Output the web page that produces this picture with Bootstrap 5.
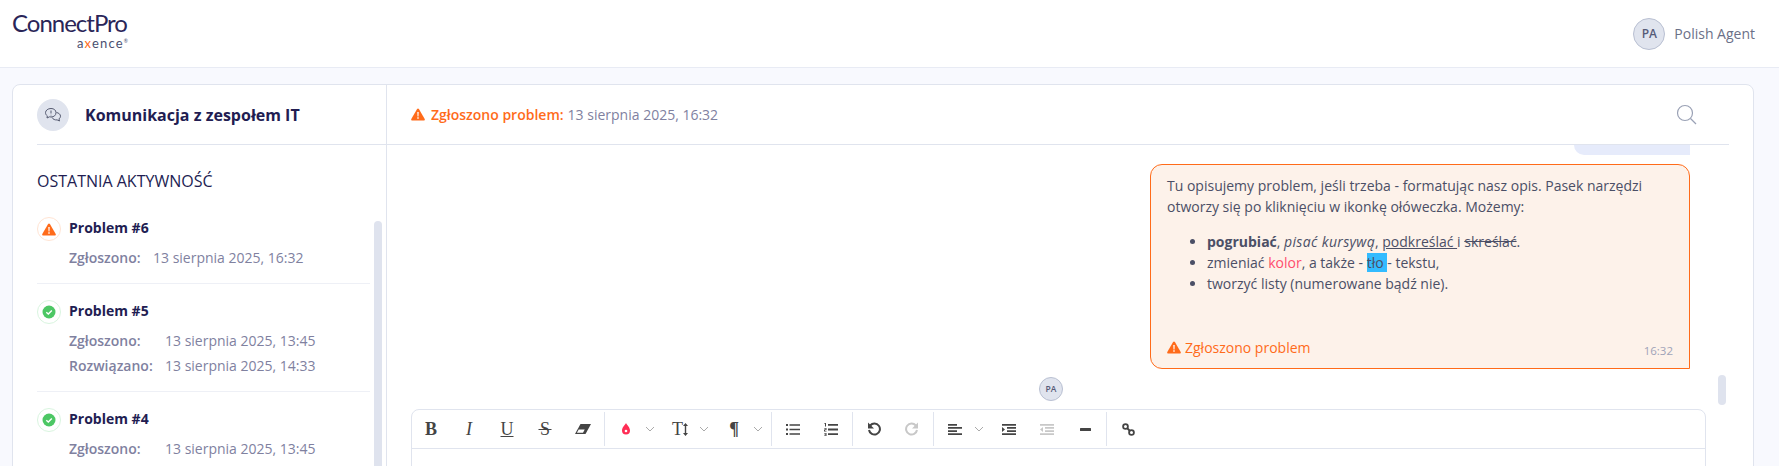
<!doctype html>
<html lang="pl"><head><meta charset="utf-8"><title>ConnectPro</title>
<link href="https://cdn.jsdelivr.net/npm/bootstrap@5.3.0/dist/css/bootstrap.min.css" rel="stylesheet">
<style>
html,body{height:466px;overflow:hidden}
body{font-family:"Open Sans","Noto Sans",sans-serif;background:#f8f9fe;color:#4b4f66;font-size:14px}
.topbar{height:68px;background:#fff;border-bottom:1px solid #e8ebf4;padding:0 24px 0 12px}
.logo-box{width:116px;margin-top:-7px;line-height:1}
.logo-main{font-family:"Lato",sans-serif;font-weight:400;font-size:24px;color:#2a2558;letter-spacing:-1px;display:block;line-height:24px;white-space:nowrap}
.logo-sub{font-family:"Lato",sans-serif;font-size:13px;color:#4a4f70;display:block;text-align:right;line-height:11px;margin-top:3px;letter-spacing:1.2px}
.logo-sub b{color:#ff6b1a;font-weight:400}
.logo-sub sup{font-size:5px;top:-1em;letter-spacing:0}
.ava{width:32px;height:32px;border-radius:50%;background:#e0e4ee;border:1px solid #b9c0d2;color:#565b78;font-weight:600;font-size:12px}
.ava-sm{width:24px;height:24px;font-size:8.5px}
.agent-name{color:#6b7088;font-size:14px;margin-left:9px}
.panel{margin:16px 25px 0 12px;background:#fff;border:1px solid #e0e4ee;border-radius:8px 8px 0 0;height:400px;overflow:hidden}
.side{width:374px;border-right:1px solid #e0e4ee;flex:none}
.side-head{height:60px;margin-left:24px;border-bottom:1px solid #e0e4ee}
.head-ico{width:32px;height:32px;border-radius:50%;background:#e0e4ee;margin-right:16px}
.side-title{font-size:16px;font-weight:700;color:#221d52}
.recent{font-size:16px;font-weight:500;color:#221d52;margin:26px 0 0 24px;line-height:20px}
.side-wrap{margin-top:25px;padding:0 3px 0 24px}
.side-list{width:333px;margin-right:4px;flex:none}
.thumb-l{width:8px;height:300px;margin-top:5px;border-radius:4px;background:#dfe3ee;flex:none}
.prob{padding-bottom:13px;margin-bottom:15px;border-bottom:1px solid #eef0f6}
.st-ico{width:24px;height:24px;border-radius:50%;flex:none;margin:1px 8px 0 0}
.st-warn{border:1px solid #ffe4d3}
.st-ok{border:1px solid #d9f5df}
.prob-title{font-weight:700;color:#221d52;font-size:14px;line-height:24px}
.prob-line{color:#80819f;font-size:14px;line-height:25px;margin:4px 0 0 32px;white-space:nowrap}
.prob-line + .prob-line{margin-top:0}
.prob-line span:first-child{font-weight:600;display:inline-block}
.lbl-a{width:84px}.lbl-b{width:96px}
.main-col{min-width:0;position:relative}
.main-head{height:60px;padding:0 32px 0 24px;margin-right:24px;border-bottom:1px solid #e0e4ee}
.warn-txt{color:#ff6b1a;font-weight:600}
.date-txt{color:#80819f}
.head-warn{margin-right:6px}
.msgs{padding-right:63px}
.stub{width:116px;height:10px;background:#e6ebfb;border-bottom-left-radius:12px}
.bubble{width:540px;height:205px;margin-top:9px;background:#fdf2ea;border:1px solid #ff6b1a;border-radius:12px 12px 0 12px;padding:10px 16px 0;line-height:21px;position:relative}
.bubble p{margin:0 0 14px}
.bubble ul{margin:0;padding-left:40px}
.bubble em{letter-spacing:.35px}
.pink{color:#ff4d6d}.blue{background:#33bbff}
.b-foot{position:absolute;left:16px;bottom:10px;color:#ff6b1a}
.b-time{position:absolute;right:16px;bottom:7px;font-size:11.5px;color:#a0a3b8}
.av-row{margin:8px 0 0 652px;height:24px}
.editor{width:1295px;margin:8px 0 0 24px;border:1px solid #e0e4ee;border-radius:8px 8px 0 0;height:80px}
.tbar{height:39px;border-bottom:1px solid #e0e4ee;padding-top:2px}
.tgroup{height:34px;padding-right:2px;margin-right:2px;border-right:1px solid #e0e4ee}
.tgroup:last-child{border-right:0}
.tb{width:38px;height:34px;color:#444;flex:none;font-family:"Liberation Serif",serif;font-size:18px;line-height:1}
.tc{width:16px;height:34px;flex:none}
.thumb-r{position:absolute;right:27px;top:290px;width:8px;height:30px;border-radius:4px;background:#dfe3ee}
</style></head><body>
<header class="topbar d-flex align-items-center justify-content-between">
  <div class="logo-box"><span class="logo-main">ConnectPro</span><span class="logo-sub">a<b>x</b>ence<sup>®</sup></span></div>
  <div class="d-flex align-items-center"><div class="ava d-flex align-items-center justify-content-center">PA</div><span class="agent-name">Polish Agent</span></div>
</header>
<div class="panel d-flex">
  <aside class="side">
    <div class="side-head d-flex align-items-center">
      <div class="head-ico d-flex align-items-center justify-content-center"><svg width="18" height="16" viewBox="0 0 18 16" fill="none" stroke="#555a70" stroke-width="1"><path d="M7 1.500c-3 0-5.500 1.800-5.500 4.200 0 1.300.7 2.400 1.800 3.200L3 11l2.500-1.200c.5.100 1 .2 1.500.2 3 0 5-1.800 5-4.300S10 1.500 7 1.500z"/><path d="M12.500 5.500c2.200.4 4 1.800 4 3.700 0 1.100-.6 2-1.500 2.700l.5 2.100-2.400-1.100c-2 .3-4.300-.6-5-2.400"/><path d="M7 3.500v3M7 7.800v.6"/></svg></div>
      <div class="side-title">Komunikacja z zespołem IT</div>
    </div>
    <div class="recent">OSTATNIA AKTYWNOŚĆ</div>
    <div class="side-wrap d-flex">
      <div class="side-list">
        <div class="prob">
          <div class="d-flex"><div class="st-ico st-warn d-flex align-items-center justify-content-center"><svg width="14" height="13" viewBox="0 0 14 13"><path fill="#ff6b1a" d="M7 .5c.4 0 .7.2.9.5l5.800 10c.4.700-.1 1.500-.9 1.500H1.200c-.8 0-1.300-.8-.9-1.500L6.100 1c.2-.3.500-.5.900-.5z"/><path fill="#fff" d="M6.300 4h1.400l-.2 4.500h-1zM6.300 9.300h1.400v1.400H6.300z"/></svg></div><div class="prob-title">Problem #6</div></div>
          <div class="prob-line"><span class="lbl-a">Zgłoszono:</span><span>13 sierpnia 2025, 16:32</span></div>
        </div>
        <div class="prob">
          <div class="d-flex"><div class="st-ico st-ok d-flex align-items-center justify-content-center"><svg width="14" height="14" viewBox="0 0 14 14"><circle cx="7" cy="7" r="6.500" fill="#4cc764"/><path d="M4.300 7.200l2 1.800 3.500-3.500" fill="none" stroke="#fff" stroke-width="1.400"/></svg></div><div class="prob-title">Problem #5</div></div>
          <div class="prob-line"><span class="lbl-b">Zgłoszono:</span><span>13 sierpnia 2025, 13:45</span></div>
          <div class="prob-line"><span class="lbl-b">Rozwiązano:</span><span>13 sierpnia 2025, 14:33</span></div>
        </div>
        <div class="prob">
          <div class="d-flex"><div class="st-ico st-ok d-flex align-items-center justify-content-center"><svg width="14" height="14" viewBox="0 0 14 14"><circle cx="7" cy="7" r="6.500" fill="#4cc764"/><path d="M4.300 7.200l2 1.800 3.500-3.500" fill="none" stroke="#fff" stroke-width="1.400"/></svg></div><div class="prob-title">Problem #4</div></div>
          <div class="prob-line"><span class="lbl-b">Zgłoszono:</span><span>13 sierpnia 2025, 13:45</span></div>
        </div>
      </div>
      <div class="thumb-l"></div>
    </div>
  </aside>
  <main class="main-col flex-grow-1">
    <div class="main-head d-flex align-items-center justify-content-between">
      <div class="d-flex align-items-center"><svg class="head-warn" width="14" height="13" viewBox="0 0 14 13"><path fill="#ff6b1a" d="M7 .5c.4 0 .7.2.9.5l5.800 10c.4.700-.1 1.500-.9 1.500H1.200c-.8 0-1.300-.8-.9-1.500L6.100 1c.2-.3.500-.5.900-.5z"/><path fill="#fff" d="M6.300 4h1.400l-.2 4.500h-1zM6.300 9.300h1.400v1.400H6.300z"/></svg><span class="warn-txt">Zgłoszono problem:</span><span class="date-txt ms-1">13 sierpnia 2025, 16:32</span></div>
      <svg width="21" height="21" viewBox="0 0 21 21" fill="none" stroke="#9aa1b5" stroke-width="1.200"><circle cx="9" cy="9" r="7.500"/><path d="M14.500 14.500l5.500 5.500"/></svg>
    </div>
    <div class="msgs d-flex flex-column align-items-end">
      <div class="stub"></div>
      <div class="bubble">
        <p>Tu opisujemy problem, jeśli trzeba - formatując nasz opis. Pasek narzędzi otworzy się po kliknięciu w ikonkę ołóweczka. Możemy:</p>
        <ul>
          <li><strong>pogrubiać</strong>, <em>pisać kursywą</em>, <u>podkreślać </u>i <s>skreślać</s>.</li>
          <li>zmieniać <span class="pink">kolor</span>, a także - <span class="blue">tło </span>- tekstu,</li>
          <li>tworzyć listy (numerowane bądź nie).</li>
        </ul>
        <div class="b-foot d-flex align-items-center"><svg class="me-1" width="14" height="13" viewBox="0 0 14 13"><path fill="#ff6b1a" d="M7 .5c.4 0 .7.2.9.5l5.800 10c.4.700-.1 1.500-.9 1.500H1.200c-.8 0-1.300-.8-.9-1.500L6.100 1c.2-.3.500-.5.900-.5z"/><path fill="#fff" d="M6.300 4h1.400l-.2 4.500h-1zM6.300 9.300h1.400v1.400H6.300z"/></svg>Zgłoszono problem</div>
        <div class="b-time">16:32</div>
      </div>
    </div>
    <div class="thumb-r"></div>
    <div class="av-row"><div class="ava ava-sm d-flex align-items-center justify-content-center">PA</div></div>
    <div class="editor">
      <div class="tbar d-flex">
        <div class="tgroup d-flex">
          <div class="tb d-flex align-items-center justify-content-center fw-bold">B</div>
          <div class="tb d-flex align-items-center justify-content-center fst-italic">I</div>
          <div class="tb d-flex align-items-center justify-content-center text-decoration-underline">U</div>
          <div class="tb d-flex align-items-center justify-content-center text-decoration-line-through">&#8202;S&#8202;</div>
          <div class="tb d-flex align-items-center justify-content-center"><svg width="16" height="10" viewBox="0 0 16 10"><path fill="#444" d="M5.500 0H16l-5.500 10H0z"/><path fill="#fff" d="M3.700 5.600h6L8 8.800H1.900z"/></svg></div>
        </div>
        <div class="tgroup d-flex">
          <div class="tb d-flex align-items-center justify-content-center"><svg width="10" height="12" viewBox="0 0 10 12"><path fill="#ff2d55" d="M5 0c.8 2 4 4 4 7.500A4 4 0 0 1 1 7.500C1 4 4.200 2 5 0z"/><circle cx="5" cy="8" r="1.300" fill="#fff"/></svg></div>
          <div class="tc d-flex align-items-center"><svg width="10" height="6" viewBox="0 0 10 6" fill="none" stroke="#aaa"><path d="M1 1l4 4 4-4"/></svg></div>
          <div class="tb d-flex align-items-center justify-content-center">T<svg width="5" height="13" viewBox="0 0 5 13"><path fill="#444" d="M2.500 0L5 3H3.200v7H5l-2.500 3L0 10h1.800V3H0z"/></svg></div>
          <div class="tc d-flex align-items-center"><svg width="10" height="6" viewBox="0 0 10 6" fill="none" stroke="#aaa"><path d="M1 1l4 4 4-4"/></svg></div>
          <div class="tb d-flex align-items-center justify-content-center fw-bold">¶</div>
          <div class="tc d-flex align-items-center"><svg width="10" height="6" viewBox="0 0 10 6" fill="none" stroke="#aaa"><path d="M1 1l4 4 4-4"/></svg></div>
        </div>
        <div class="tgroup d-flex">
          <div class="tb d-flex align-items-center justify-content-center"><svg width="14" height="11" viewBox="0 0 14 11" fill="#444"><path d="M0 0h2v2H0zM0 4.500h2v2H0zM0 9h2v2H0zM3.500 .2H14v1.600H3.500zM3.500 4.700H14v1.600H3.500zM3.500 9.200H14v1.600H3.500z"/></svg></div>
          <div class="tb d-flex align-items-center justify-content-center"><svg width="14" height="13" viewBox="0 0 14 13" fill="#444"><path d="M4 1h10v1.800H4zM4 5.600h10v1.800H4zM4 10.200h10V12H4zM.5 0H2v3.500H1V1H.5zM0 5h2.500v2.200H1V8h1.500v.6H0V6.600h1.500V5.600H0zM0 10h2.500v3H0v-.6h1.500V11.700H.5v-.5h1v-.6H0z"/></svg></div>
        </div>
        <div class="tgroup d-flex">
          <div class="tb d-flex align-items-center justify-content-center"><svg width="14" height="14" viewBox="0 0 14 14" fill="none" stroke="#444" stroke-width="2"><path d="M3.200 3.500A5.500 5.500 0 1 1 2 8"/><path fill="#444" stroke="none" d="M1 .5v6h6z"/></svg></div>
          <div class="tb d-flex align-items-center justify-content-center"><svg width="14" height="14" viewBox="0 0 14 14" fill="none" stroke="#c8c8c8" stroke-width="2"><path d="M10.800 3.500A5.500 5.500 0 1 0 12 8"/><path fill="#c8c8c8" stroke="none" d="M13 .5v6H7z"/></svg></div>
        </div>
        <div class="tgroup d-flex">
          <div class="tb d-flex align-items-center justify-content-center"><svg width="14" height="11" viewBox="0 0 14 11" fill="#444"><path d="M0 0h9v1.700H0zM0 3.100h14v1.700H0zM0 6.200h9v1.700H0zM0 9.300h14V11H0z"/></svg></div>
          <div class="tc d-flex align-items-center"><svg width="10" height="6" viewBox="0 0 10 6" fill="none" stroke="#aaa"><path d="M1 1l4 4 4-4"/></svg></div>
          <div class="tb d-flex align-items-center justify-content-center"><svg width="14" height="11" viewBox="0 0 14 11" fill="#444"><path d="M0 0h14v1.700H0zM5 3.100h9v1.700H5zM5 6.200h9v1.700H5zM0 9.300h14V11H0zM0 3l3 2.500L0 8z"/></svg></div>
          <div class="tb d-flex align-items-center justify-content-center"><svg width="14" height="11" viewBox="0 0 14 11" fill="#c8c8c8"><path d="M0 0h14v1.700H0zM5 3.100h9v1.700H5zM5 6.200h9v1.700H5zM0 9.300h14V11H0zM3 3L0 5.500 3 8z"/></svg></div>
          <div class="tb d-flex align-items-center justify-content-center"><svg width="11" height="3" viewBox="0 0 11 3"><rect width="11" height="3" rx=".5" fill="#444"/></svg></div>
        </div>
        <div class="tgroup d-flex">
          <div class="tb d-flex align-items-center justify-content-center"><svg width="13" height="13" viewBox="0 0 13 13" fill="none" stroke="#444" stroke-width="1.800"><circle cx="3.500" cy="3.500" r="2.400"/><circle cx="9.500" cy="9.500" r="2.400"/><path d="M5 5l3 3"/></svg></div>
        </div>
      </div>
    </div>
  </main>
</div>
</body></html>
